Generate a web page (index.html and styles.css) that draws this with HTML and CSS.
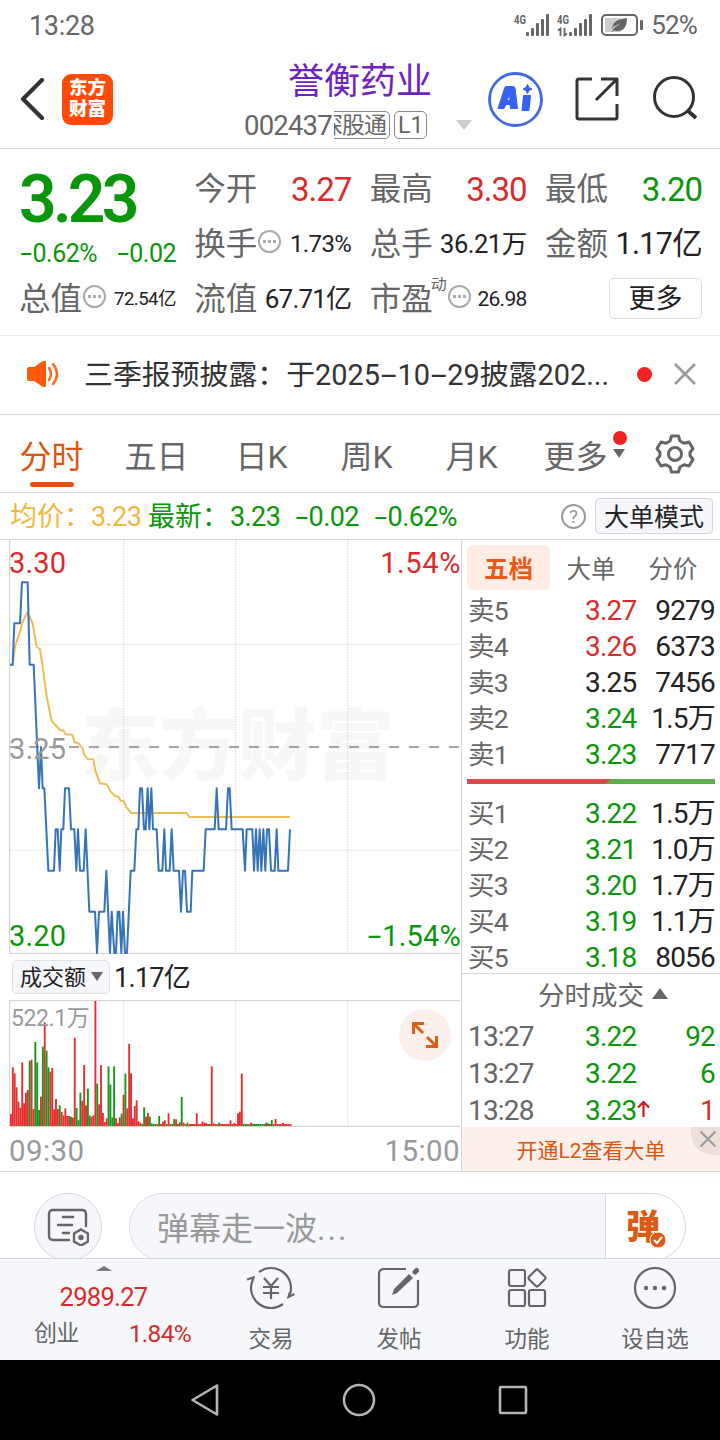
FILE: index.html
```html
<!DOCTYPE html>
<html lang="zh-CN">
<head>
    <meta charset="UTF-8">
    <meta name="viewport" content="width=device-width, initial-scale=1.0">
    <title>誉衡药业 002437</title>
    <link rel="stylesheet" href="styles.css">
</head>
<body>
    <div class="status-bar">
        <span class="clock">13:28</span>
        <div class="status-right">
            <svg width="130" height="26" viewBox="0 0 130 26" fill="#666">
                <text class="net" x="1" y="11" textLength="12" lengthAdjust="spacingAndGlyphs">4G</text>
                <g id="bars">
                    <rect x="13" y="19" width="3" height="4" rx="1"/><rect x="18" y="15" width="3" height="8" rx="1"/><rect x="23" y="10" width="3" height="13" rx="1"/><rect x="28" y="6" width="3" height="17" rx="1"/><rect x="33" y="1" width="3" height="22" rx="1"/>
                </g>
                <text class="net" x="44" y="11" textLength="12" lengthAdjust="spacingAndGlyphs">4G</text>
                <path d="M45 17.500l2.500-2v7.500M54 20.500l-2.500 2v-7.500" fill="none" stroke="#666" stroke-width="1.8"/>
                <use href="#bars" x="43"/>
                <rect x="89" y="2" width="35" height="20" rx="4" fill="none" stroke="#666" stroke-width="2"/>
                <rect x="92" y="5" width="16" height="14" rx="1" fill="#ccc"/>
                <path d="M99 17c0-8 5-11 15-12c0 8-3 13-9 13c-2 0-3 0-4-1l-1 2h-1l2-4l7-5l-8 4z"/>
                <rect x="127" y="7" width="3" height="10" rx="1"/>
            </svg>
            <span>52%</span>
        </div>
    </div>

    <header class="header">
        <svg class="back" width="25" height="42" viewBox="0 0 25 42"><path d="M22 2L3 21l19 19" fill="none" stroke="#333" stroke-width="4.200" stroke-linecap="round" stroke-linejoin="round"/></svg>
        <div class="logo"><span>东方</span><span>财富</span></div>
        <div class="stock">
            <h1>誉衡药业</h1>
            <div class="code-row">
                <span class="code">002437</span>
                <span class="tag-clip"><span class="tag">深股通</span></span>
                <span class="tag">L1</span>
                <i class="down"></i>
            </div>
        </div>
        <div class="header-icons">
            <svg width="55" height="55" viewBox="0 0 55 55">
                <circle cx="27.500" cy="27.500" r="26" fill="#fff" stroke="#4169e1" stroke-width="2.800"/>
                <path d="M18 14.500h7q1.500 0 2 2l2.500 20h-7l-.5-4h-4l-2 4h-6l6.500-20q.5-2 1.500-2zM21.500 22l-2.500 6.500h3z" fill="#3561f5" stroke="#3561f5" stroke-linejoin="round" fill-rule="evenodd"/>
                <path d="M36 24h6l-1.500 14h-6z" fill="#3561f5" stroke="#3561f5" stroke-width="2" stroke-linejoin="round"/>
                <path d="M39.500 12.500l1.500 3l3 1.500l-3 1.500l-1.500 3l-1.500-3l-3-1.500l3-1.500z" fill="#3561f5" stroke="#3561f5"/>
            </svg>
            <svg width="44" height="44" viewBox="0 0 44 44" fill="none" stroke="#333" stroke-width="3" stroke-linejoin="round">
                <path d="M17 2H4q-2 0-2 2v36q0 2 2 2h36q2 0 2-2V27M21 23L41 3M26 2h16v17"/>
            </svg>
            <svg width="46" height="46" viewBox="0 0 46 46" fill="none" stroke="#333" stroke-width="3">
                <circle cx="21" cy="21" r="19.500"/><path d="M34 34l9 8" stroke-width="4"/>
            </svg>
        </div>
    </header>

    <section class="quote">
        <div class="col">
            <div class="price">3.23</div>
            <div class="change"><span><u>-</u>0.62%</span><span><u>-</u>0.02</span></div>
            <div class="cell"><label>总值</label><i class="dots"></i><b class="s19">72.54亿</b></div>
        </div>
        <div class="col">
            <div class="cell"><label>今开</label><b class="s33 red">3.27</b></div>
            <div class="cell"><label>换手</label><i class="dots"></i><b class="s24">1.73%</b></div>
            <div class="cell"><label>流值</label><b class="s27">67.71亿</b></div>
        </div>
        <div class="col">
            <div class="cell"><label>最高</label><b class="s33 red">3.30</b></div>
            <div class="cell"><label>总手</label><b class="s26">36.21万</b></div>
            <div class="cell"><label>市盈</label><sup>动</sup><i class="dots"></i><b class="s21">26.98</b></div>
        </div>
        <div class="col">
            <div class="cell"><label>最低</label><b class="s33 green">3.20</b></div>
            <div class="cell"><label>金额</label><b class="s31">1.17亿</b></div>
            <div class="cell"><span class="more-btn">更多</span></div>
        </div>
    </section>

    <section class="notice">
        <svg width="34" height="26" viewBox="0 0 34 26">
            <path d="M1 8q0-2 2-2h5l9-6q3-1 3 2v22q0 3-3 2l-9-6H3q-2 0-2-2z" fill="#ff5a0a"/>
            <path d="M23 7q4 6 0 12M27 3q8 10 0 20" fill="none" stroke="#ff6a20" stroke-width="2.500" stroke-linecap="round"/>
        </svg>
        <p>三季报预披露：于2025<u>-</u>10<u>-</u>29披露202...</p>
        <i class="dot"></i>
        <svg width="24" height="24" viewBox="0 0 24 24"><path d="M2 2l20 20M22 2L2 22" stroke="#999" stroke-width="2.600"/></svg>
    </section>

    <nav class="tabs">
        <span class="tab active">分时</span>
        <span class="tab">五日</span>
        <span class="tab">日K</span>
        <span class="tab">周K</span>
        <span class="tab">月K</span>
        <span class="tab more">更多<i class="badge"></i><i class="caret"></i></span>
        <svg class="gear" width="40" height="40" viewBox="0 0 40 40" fill="none" stroke="#666" stroke-width="3" stroke-linejoin="round">
            <path d="M16.500 2h7l1.500 5l4 2.300l5-1.300l4 6.500l-3 4v3l3 4l-4 6.500l-5-1.300l-4 2.300l-1.500 5h-7l-1.500-5l-4-2.300l-5 1.300l-4-6.500l3-4v-3l-3-4l4-6.500l5 1.300l4-2.300z"/>
            <circle cx="20" cy="20" r="6.500"/>
        </svg>
    </nav>

    <section class="info">
        <span class="avg">均价：</span><span class="avg num">3.23</span>
        <span class="latest">最新：</span><span class="num n1">3.23</span><span class="num n2"><u>-</u>0.02</span><span class="num n3"><u>-</u>0.62%</span>
        <i class="help">?</i>
        <span class="mode-btn">大单模式</span>
    </section>

    <main class="main">
        <div class="left">
            <div class="chart">
                <svg width="461" height="414" viewBox="0 0 1383 1242">
                    <text class="watermark" x="244" y="702" textLength="940">东方财富</text>
                    <g class="grid">
                        <path d="M371 0V1239M707 0V1239M1043 0V1239M30 313H1383M30 931H1383"/>
                    </g>
                    <path class="axis" d="M29 0V1239M28 1240H1380"/>
                    <path class="mid" d="M30 621H1380"/>
                    <polyline class="avg-line" points="30,374 38,374 45,320 60,275 68,245 82,217 98,250 110,320 120,328 128,380 140,470 155,543 180,570 190,572 197,583 217,584 224,607 236,610 248,625 252,643 263,657 280,658 286,692 300,730 320,733 332,755 345,768 355,770 362,782 371,783 380,803 394,819 560,819 567,831 870,831"/>
                    <polyline class="price-line" points="30,374 38,374 43,250 60,250 66,127 83,127 89,374 101,374 117,745 123,621 128,745 133,745 145,992 162,992 167,868 173,868 179,992 184,868 190,868 195,745 207,745 213,868 223,868 229,992 234,868 240,992 251,992 257,868 268,1115 285,1115 291,1239 297,1115 313,1115 319,992 330,1239 335,1115 343,1239 348,1239 353,1115 358,1115 364,1239 369,1115 375,1239 381,1239 392,992 403,992 409,868 415,868 420,745 426,745 432,868 437,868 443,745 448,868 454,745 459,868 470,868 476,992 487,992 493,868 498,992 509,992 515,868 521,992 537,992 543,1115 549,992 555,992 561,1115 572,1115 577,992 611,992 617,868 644,868 650,745 656,868 678,868 684,745 689,745 695,868 728,868 735,992 740,868 757,868 762,992 768,868 773,992 779,868 784,992 790,868 796,992 801,868 807,868 813,992 824,992 830,868 835,992 864,992 870,868"/>
                </svg>
                <span class="lbl tl red">3.30</span>
                <span class="lbl tr red">1.54%</span>
                <span class="lbl ml">3.25</span>
                <span class="lbl bl green">3.20</span>
                <span class="lbl br green"><u>-</u>1.54%</span>
            </div>
            <div class="vol-head">
                <span class="vol-btn">成交额<i class="caret"></i></span>
                <span class="vol-total">1.17亿</span>
            </div>
            <div class="volume">
                <svg width="461" height="128" viewBox="0 0 1383 384">
                    <path class="grid" d="M371 3V378M707 3V378M1043 3V378"/>
                    <path class="axis" d="M29 0V378M28 2H1380M28 379H1380"/>
                    <g id="vol"></g>
                </svg>
                <span class="vol-max">522.1万</span>
                <span class="expand">
                    <svg width="28" height="28" viewBox="0 0 28 28" fill="none" stroke="#d9601a" stroke-width="3"><path d="M2.500 13V2.500H13M3 3l9 9M25.500 15v10.500H15M25 25l-9-9"/></svg>
                </span>
            </div>
            <div class="times"><span>09:30</span><span>15:00</span></div>
        </div>

        <div class="right">
            <div class="book-tabs"><span class="on">五档</span><span>大单</span><span>分价</span></div>
            <div class="row"><span>卖5</span><b class="red">3.27</b><em>9279</em></div>
            <div class="row"><span>卖4</span><b class="red">3.26</b><em>6373</em></div>
            <div class="row"><span>卖3</span><b>3.25</b><em>7456</em></div>
            <div class="row"><span>卖2</span><b class="green">3.24</b><em>1.5万</em></div>
            <div class="row"><span>卖1</span><b class="green">3.23</b><em>7717</em></div>
            <div class="ratio"></div>
            <div class="row"><span>买1</span><b class="green">3.22</b><em>1.5万</em></div>
            <div class="row"><span>买2</span><b class="green">3.21</b><em>1.0万</em></div>
            <div class="row"><span>买3</span><b class="green">3.20</b><em>1.7万</em></div>
            <div class="row"><span>买4</span><b class="green">3.19</b><em>1.1万</em></div>
            <div class="row"><span>买5</span><b class="green">3.18</b><em>8056</em></div>
            <div class="deals-head">分时成交<i class="up"></i></div>
            <div class="row deal"><span>13:27</span><b class="green">3.22</b><em class="green">92</em></div>
            <div class="row deal"><span>13:27</span><b class="green">3.22</b><em class="green">6</em></div>
            <div class="row deal"><span>13:28</span><b class="green">3.23<svg class="arrow" width="13" height="17" viewBox="0 0 13 17"><path d="M6.500 17V2M1 7.500L6.500 2L12 7.500" fill="none" stroke="#c81e1e" stroke-width="2.200"/></svg></b><em class="red">1</em></div>
            <div class="l2">开通L2查看大单
                <span class="l2-close"><svg width="18" height="18" viewBox="0 0 18 18"><path d="M1.500 1.500l15 15M16.500 1.500l-15 15" stroke="#999" stroke-width="2"/></svg></span>
            </div>
        </div>
    </main>

    <section class="danmu">
        <span class="danmu-set">
            <svg width="42" height="38" viewBox="0 0 42 38" fill="none" stroke="#666" stroke-width="2.400">
                <path d="M22 32H6q-4 0-4-4V6q0-4 4-4h29q4 0 4 4v12M16 9h10M11 17h14M16 25h6" stroke-linecap="round"/>
                <path d="M34 21.500l7 4v8l-7 4l-7-4v-8z"/><circle cx="34" cy="29.500" r="1.500" fill="#666"/>
            </svg>
        </span>
        <div class="danmu-box">
            <span class="danmu-input">弹幕走一波<small>...</small></span>
            <span class="danmu-send">弹
                <svg class="check" width="18" height="18" viewBox="0 0 18 18"><circle cx="9" cy="9" r="8" fill="#dc5a14" stroke="#fff" stroke-width="1"/><path d="M5 9l3 3l5-6" fill="none" stroke="#fff" stroke-width="2"/></svg>
            </span>
        </div>
    </section>

    <footer class="bottom">
        <div class="index">
            <i class="up-flat"></i>
            <b>2989.27</b>
            <div><span>创业</span><em>1.84%</em></div>
        </div>
        <div class="item">
            <svg width="50" height="44" viewBox="0 0 50 44" fill="none" stroke="#666" stroke-width="2.200">
                <path d="M13 6A20 20 0 0 1 44 28.200M37 38A20 20 0 0 1 6 15.800M1 13.500l6.500-2l-1.500 5M48.500 28l-6 3l1.500-5"/>
                <path d="M18 12l7 8l7-8M17 21h16M17 27h16M25 20v13"/>
            </svg>
            <span>交易</span>
        </div>
        <div class="item">
            <svg width="44" height="44" viewBox="0 0 44 44" fill="none" stroke="#666" stroke-width="2.200">
                <path d="M29 3H7q-5 0-5 5v29q0 4 5 4h29q5 0 5-4V14"/>
                <path d="M15 29l2-6L32 8l4 4L20 27z" fill="#666" stroke="none"/><path d="M38 6l1.500-1.500" stroke-width="5" stroke-linecap="round"/>
            </svg>
            <span>发帖</span>
        </div>
        <div class="item">
            <svg width="44" height="44" viewBox="0 0 44 44" fill="none" stroke="#666" stroke-width="2.200">
                <rect x="4" y="4" width="16" height="16" rx="2"/><rect x="4" y="24" width="16" height="16" rx="2"/><rect x="24" y="24" width="16" height="16" rx="2"/>
                <rect x="25.500" y="5.500" width="13" height="13" rx="2" transform="rotate(45 32 12)"/>
            </svg>
            <span>功能</span>
        </div>
        <div class="item">
            <svg width="44" height="44" viewBox="0 0 44 44">
                <circle cx="22" cy="22" r="20" fill="none" stroke="#666" stroke-width="2.200"/>
                <g fill="#666"><circle cx="13" cy="22" r="2.200"/><circle cx="22" cy="22" r="2.200"/><circle cx="31" cy="22" r="2.200"/></g>
            </svg>
            <span>设自选</span>
        </div>
    </footer>

    <div class="sysnav">
        <svg width="30" height="34" viewBox="0 0 30 34"><path d="M27 2.500v29L2.500 17z"/></svg>
        <svg width="34" height="34" viewBox="0 0 34 34"><circle cx="17" cy="17" r="15"/></svg>
        <svg width="30" height="30" viewBox="0 0 30 30"><rect x="2" y="2" width="26" height="26" rx="1"/></svg>
    </div>

    <script src="chart.js"></script>
</body>
</html>
```

FILE: styles.css
```css
* {
    box-sizing: border-box;
}
body {
    margin: 0;
    width: 720px;
    height: 1440px;
    overflow: hidden;
    background-color: #fff;
    color: #222;
    font-family: Roboto, "Noto Sans CJK SC", sans-serif;
    line-height: 1.2;
    display: flex;
    flex-direction: column;
}
body > * {
    flex-shrink: 0;
}
svg {
    display: block;
    flex-shrink: 0;
}
i, em {
    font-style: normal;
}
b {
    font-weight: 400;
}
/* wide minus sign */
u {
    display: inline-block;
    width: 0.54em;
    text-align: center;
    text-decoration: none;
    transform: scaleX(1.7);
}
.red {
    color: #d92b2b !important;
}
.green {
    color: #0a960a !important;
}

/* status bar */
.status-bar {
    height: 50px;
    padding: 2px 23px 0 29px;
    display: flex;
    justify-content: space-between;
    align-items: center;
    color: #666;
    font-size: 27px;
}
.clock {
    letter-spacing: -0.3px;
}
.status-right {
    display: flex;
    align-items: center;
    gap: 8px;
    font-size: 26px;
    letter-spacing: -0.8px;
}
.status-right svg {
    margin-top: -1px;
}
.net {
    font-size: 13px;
    font-weight: 700;
    letter-spacing: 0;
}

/* header */
.header {
    height: 99px;
    border-bottom: 1px solid #d8d8d8;
    display: flex;
    align-items: center;
    padding-left: 20px;
}
.logo {
    width: 51px;
    height: 51px;
    margin-left: 17px;
    border-radius: 9px;
    background-color: #ff4b05;
    color: #fff;
    display: flex;
    flex-direction: column;
    align-items: center;
    justify-content: center;
    font-size: 18.5px;
    font-weight: 900;
    line-height: 21px;
}
.stock {
    width: 375px;
    padding: 2px 0 0 131px;
}
h1 {
    margin: 0;
    padding-left: 44px;
    font-size: 36px;
    font-weight: 400;
    line-height: 50px;
    color: #6f22c4;
}
.code-row {
    display: flex;
    align-items: center;
    height: 36px;
    color: #666;
}
.code {
    font-size: 27.5px;
    letter-spacing: -0.8px;
    width: 90px;
}
.tag-clip {
    width: 56px;
    overflow: hidden;
    display: flex;
    justify-content: flex-end;
    margin-right: 4px;
}
.tag {
    border: 1px solid #888;
    border-radius: 5px;
    font-size: 23px;
    line-height: 27px;
    height: 28px;
    padding: 0 3px;
    white-space: nowrap;
}
.tag-clip .tag {
    letter-spacing: -1px;
}
.down {
    margin-left: 29px;
    border: 8px solid transparent;
    border-top: 10px solid #ccc;
    border-bottom: 0;
}
.header-icons {
    display: flex;
    align-items: center;
    gap: 32px;
}
.header-icons svg:last-child {
    margin-left: 2px;
}

/* quote block */
.quote {
    height: 187px;
    border-bottom: 1px solid #e8e8e8;
    padding: 13px 18px 0 19px;
    display: flex;
    justify-content: space-between;
}
.col {
    width: 157px;
}
.cell {
    height: 55px;
    display: flex;
    align-items: center;
    white-space: nowrap;
}
.cell label {
    font-size: 31.5px;
    color: #666;
}
.cell b {
    margin-left: auto;
}
.price {
    height: 76px;
    line-height: 76px;
    font-size: 66px;
    font-weight: 600;
    letter-spacing: -3.8px;
    color: #0a960a;
}
.change {
    height: 34px;
    line-height: 32px;
    display: flex;
    justify-content: space-between;
    font-size: 25px;
    letter-spacing: -0.5px;
    color: #0a960a;
}
.s19 {
    font-size: 18.5px;
    letter-spacing: -0.5px;
}
.s21 {
    font-size: 21px;
    letter-spacing: -0.7px;
}
.s24 {
    font-size: 24px;
    letter-spacing: -0.6px;
}
.s26 {
    font-size: 25.5px;
    letter-spacing: -0.5px;
}
.s27 {
    font-size: 26px;
    letter-spacing: -0.8px;
}
.s31 {
    font-size: 30.5px;
    letter-spacing: -0.7px;
}
.s33 {
    font-size: 33px;
    letter-spacing: -1px;
}
.dots {
    width: 23px;
    height: 23px;
    margin: -6px 0 0 1px;
    border: 2px solid #aaa;
    border-radius: 50%;
    background: radial-gradient(circle, #aaa 1.4px, transparent 1.9px) center / 5px 19px repeat-x;
    background-clip: content-box;
    padding: 0 2px;
}
sup {
    margin: 3px 0 0 -2px;
    font-size: 16px;
    color: #666;
    align-self: flex-start;
    line-height: 20px;
    vertical-align: baseline;
}
.more-btn {
    width: 93px;
    height: 41px;
    margin: -3px 0 0 auto;
    border: 1px solid #ddd;
    border-radius: 5px;
    font-size: 27px;
    line-height: 40px;
    text-align: center;
}

/* notice */
.notice {
    height: 79px;
    border-bottom: 1px solid #d8d8d8;
    display: flex;
    align-items: center;
    padding: 0 23px 2px 26px;
}
.notice p {
    margin: 2px 0 0 24px;
    width: 554px;
    font-size: 28.9px;
    white-space: nowrap;
    color: #333;
}
.notice u {
    width: 0.6em;
    transform: scaleX(2);
}
.dot {
    width: 15px;
    height: 15px;
    margin-right: 21px;
    border-radius: 50%;
    background-color: #f02222;
}

/* tabs */
.tabs {
    height: 78px;
    border-bottom: 1px solid #d8d8d8;
    display: flex;
    align-items: center;
}
.tab {
    position: relative;
    width: 105px;
    height: 70px;
    padding-right: 2px;
    line-height: 76px;
    text-align: center;
    font-size: 32px;
    color: #666;
}
.tab.active {
    color: #d9560f;
}
.tab.active::after {
    content: "";
    position: absolute;
    left: 30px;
    bottom: 2px;
    width: 44px;
    height: 5px;
    border-radius: 3px;
    background-color: #d9560f;
}
.tab.more {
    padding-right: 4px;
}
.badge {
    position: absolute;
    right: 3px;
    top: 12px;
    width: 14px;
    height: 14px;
    border-radius: 50%;
    background-color: #f02222;
}
.caret {
    border: 6px solid transparent;
    border-top: 9px solid #666;
    border-bottom: 0;
}
.tab .caret {
    position: absolute;
    right: 5px;
    top: 30px;
}
.gear {
    margin-left: 25px;
}

/* price info line */
.info {
    height: 47px;
    border-bottom: 1px solid #d8d8d8;
    display: flex;
    align-items: center;
    padding: 3px 7px 0 10px;
    font-size: 27px;
    color: #0a960a;
    white-space: nowrap;
}
.avg {
    color: #f0b840;
}
.num {
    letter-spacing: -0.6px;
}
.avg.num {
    width: 57px;
}
.latest {
    width: 82px;
}
.n1 {
    width: 64px;
}
.n2 {
    width: 79px;
}
.help {
    width: 25px;
    height: 25px;
    margin: -2px 0 0 auto;
    border: 2px solid #999;
    border-radius: 50%;
    color: #999;
    font-size: 19px;
    line-height: 22px;
    text-align: center;
}
.mode-btn {
    width: 118px;
    height: 36px;
    margin: -3px 0 0 9px;
    border: 1px solid #d5d8e0;
    border-radius: 4px;
    background-color: #f6f7fa;
    color: #222;
    font-size: 25px;
    line-height: 38px;
    text-align: center;
}

/* main area */
.main {
    height: 632px;
    border-bottom: 1px solid #d8d8d8;
    display: flex;
}
.left {
    width: 462px;
    border-right: 1px solid #d8d8d8;
}
.chart {
    position: relative;
    height: 414px;
}
.grid {
    fill: none;
    stroke: #c8c8c8;
    stroke-width: 3;
    stroke-dasharray: 3 5;
}
.axis {
    fill: none;
    stroke: #ccc;
    stroke-width: 3;
}
.mid {
    stroke: #888;
    stroke-width: 5;
    stroke-dasharray: 30 30;
    stroke-dashoffset: 3;
}
.avg-line {
    fill: none;
    stroke: #efbd57;
    stroke-width: 6;
}
.price-line {
    fill: none;
    stroke: #3674b8;
    stroke-width: 6;
    stroke-linejoin: round;
}
.watermark {
    font-size: 235px;
    font-weight: 900;
    fill: #f7f7f7;
}
.lbl {
    position: absolute;
    font-size: 29px;
    line-height: 34px;
    letter-spacing: 0.2px;
}
.tl {
    left: 9px;
    top: 6px;
}
.tr {
    right: 0;
    top: 6px;
    letter-spacing: 0.6px;
}
.ml {
    left: 9px;
    top: 192px;
    color: #999;
}
.bl {
    left: 9px;
    top: 379px;
}
.br {
    right: 0;
    top: 379px;
}
.vol-head {
    height: 46px;
    display: flex;
    align-items: center;
    padding-left: 12px;
}
.vol-btn {
    width: 98px;
    height: 34px;
    border: 1px solid #dde0e5;
    border-radius: 5px;
    background-color: #f6f7fa;
    display: flex;
    align-items: center;
    justify-content: space-between;
    padding: 2px 6px 0 7px;
    font-size: 22px;
}
.vol-btn .caret {
    margin-top: -3px;
}
.vol-total {
    margin: 2px 0 0 4px;
    font-size: 27px;
    letter-spacing: -0.7px;
}
.volume {
    position: relative;
    height: 128px;
}
.vol-max {
    position: absolute;
    left: 11px;
    top: 5px;
    font-size: 23px;
    line-height: 27px;
    letter-spacing: -0.4px;
    color: #999;
}
.expand {
    position: absolute;
    left: 399px;
    top: 9px;
    width: 52px;
    height: 52px;
    border-radius: 50%;
    background-color: #fdf0ea;
    display: flex;
    align-items: center;
    justify-content: center;
}
.times {
    height: 43px;
    display: flex;
    justify-content: space-between;
    align-items: center;
    padding: 5px 1px 0 9px;
    font-size: 29.5px;
    letter-spacing: 0.4px;
    color: #999;
}

/* order book */
.right {
    width: 258px;
}
.book-tabs {
    height: 52px;
    padding: 5px 0 0 5px;
    display: flex;
}
.book-tabs span {
    width: 82px;
    height: 45px;
    line-height: 49px;
    text-align: center;
    font-size: 24.5px;
    color: #666;
}
.book-tabs .on {
    width: 83px;
    border-radius: 6px;
    background-color: #ffede5;
    color: #eb5a14;
    font-weight: 700;
}
.row {
    height: 36px;
    display: flex;
    align-items: center;
    padding: 2px 5px 0 6px;
    font-size: 28px;
    letter-spacing: -0.8px;
}
.row span {
    width: 117px;
    color: #666;
    font-size: 26.5px;
}
.row b {
    position: relative;
}
.row em {
    margin-left: auto;
}
.ratio {
    height: 5px;
    margin: 7px 5px 11px;
    background: linear-gradient(135deg, #d94b4b 101px, #5fb04a 102px);
}
.deals-head {
    height: 43px;
    margin-top: -2px;
    padding-top: 2px;
    border-top: 1px solid #d8d8d8;
    display: flex;
    align-items: center;
    padding-left: 76px;
    font-size: 26.5px;
    color: #666;
}
.up {
    margin: -6px 0 0 8px;
    border: 8px solid transparent;
    border-bottom: 11px solid #666;
    border-top: 0;
}
.row.deal {
    height: 37px;
    padding-top: 4px;
}
.deal span {
    font-size: 28px;
}
.arrow {
    position: absolute;
    left: 52px;
    top: 6px;
}
.l2 {
    position: relative;
    height: 44px;
    background-color: #fdf0ea;
    color: #d9560f;
    font-size: 21px;
    line-height: 49px;
    text-align: center;
}
.l2-close {
    position: absolute;
    right: 0;
    top: 0;
    width: 29px;
    height: 28px;
    border-bottom-left-radius: 22px;
    background-color: #ece0da;
    padding: 3px 0 0 8px;
}

/* danmu bar */
.danmu {
    height: 86px;
    padding: 21px 34px 0;
    display: flex;
    gap: 27px;
    overflow: hidden;
}
.danmu-set {
    width: 68px;
    height: 68px;
    border: 1px solid #d5d8de;
    border-radius: 50%;
    background-color: #f6f7fa;
    display: flex;
    align-items: center;
    justify-content: center;
}
.danmu-box {
    width: 557px;
    height: 68px;
    border: 1px solid #d5d8de;
    border-radius: 34px;
    overflow: hidden;
    display: flex;
}
.danmu-input {
    width: 476px;
    background-color: #f6f7fa;
    border-right: 1px solid #d5d8de;
    padding-left: 27px;
    font-size: 32px;
    line-height: 71px;
    color: #999;
}
.danmu-input small {
    font-size: inherit;
    letter-spacing: 2px;
}
.danmu-send {
    position: relative;
    padding-left: 20px;
    font-size: 34px;
    font-weight: 900;
    line-height: 67px;
    color: #dc5a14;
}
.check {
    position: absolute;
    left: 43px;
    top: 37px;
}

/* bottom bar */
.bottom {
    height: 102px;
    border-top: 1px solid #d5d8de;
    background-color: #f6f7fa;
    display: flex;
}
.index {
    width: 207px;
    display: flex;
    flex-direction: column;
    align-items: center;
    color: #d92b2b;
    font-size: 25.5px;
    letter-spacing: -0.7px;
    padding-top: 7px;
}
.up-flat {
    border: 8px solid transparent;
    border-bottom: 5px solid #777;
    border-top: 0;
}
.index b {
    line-height: 36px;
    margin-top: 8px;
}
.index div {
    width: 157px;
    margin: 2px 0 0 18px;
    display: flex;
    justify-content: space-between;
    line-height: 34px;
    font-size: 24.5px;
}
.index div span {
    color: #666;
    font-size: 23px;
}
.item {
    width: 128px;
    padding-top: 7px;
    display: flex;
    flex-direction: column;
    align-items: center;
    color: #666;
    font-size: 22.5px;
}
.item span {
    margin-top: 12px;
    line-height: 34px;
}

.sysnav {
    height: 80px;
    background-color: #000;
    display: flex;
    align-items: center;
    justify-content: center;
    gap: 122px;
}
.sysnav svg {
    fill: none;
    stroke: #b4b4b4;
    stroke-width: 2.6;
    stroke-linejoin: round;
}
.sysnav svg:first-child {
    margin-left: -2px;
}
```

FILE: chart.js
```javascript
// turnover per minute, r = up, g = down
const volumes = [
    'r36 r176 r158 r116 r73 r55 r191 r68 r100 r108 g196 r199 r51 g252 g191 g48 r88 g238 r311 g226',
    'g176 r163 r174 r50 r81 r51 g62 r43 r32 r53 r30 r30 g28 r25 r265 g54 g17 g100 r76 r183',
    'r62 g112 g31 r28 r32 r375 g127 r65 r183 r39 r12 r23 g179 g124 g26 g179 r23 r8 r26 g37',
    'r94 g157 r53 r247 r158 r23 r60 r77 r14 r10 g6 g56 r28 r39 g28 g8 g6 g6 r6 g30',
    'r6 r13 r17 g6 r38 r6 g6 g21 r20 g6 r11 g87 r10 r6 g10 r6 r6 r6 r6 r38',
    'r6 r6 r13 r10 r9 r6 g6 r179 r8 r6 r6 g10 r6 r6 r6 r6 r6 r17 r6 r9',
    'r6 r38 r43 r157 g6 g6 r6 g6 r10 g6 g6 g6 g6 g6 g6 r6 g10 r8 g6 g18',
    'r6 r21 r6 r6 r6 r9 r6 r6 r6 r6'
].join(' ').split(' ');

const vol = document.getElementById('vol');
volumes.forEach((v, i) => {
    const h = Number(v.slice(1));
    const bar = document.createElementNS('http://www.w3.org/2000/svg', 'rect');
    bar.setAttribute('x', 30 + i * 5.63);
    bar.setAttribute('y', 378 - h);
    bar.setAttribute('width', 5.63);
    bar.setAttribute('height', h);
    bar.setAttribute('fill', v[0] === 'r' ? '#e62e2e' : '#14961a');
    vol.appendChild(bar);
});
```
